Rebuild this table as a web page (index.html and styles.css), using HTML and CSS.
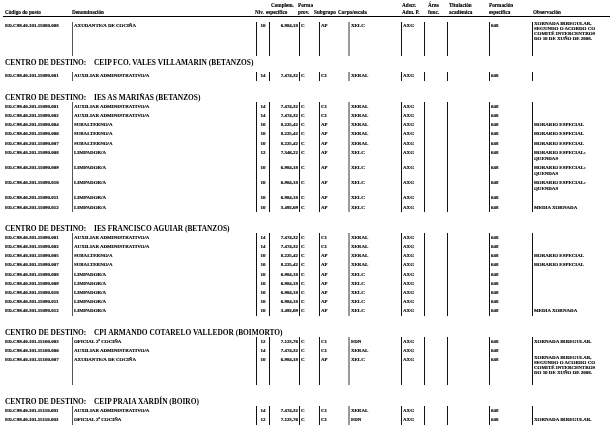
FILE: index.html
```html
<!DOCTYPE html>
<html lang="gl">
<head>
<meta charset="utf-8">
<title>Centros de destino</title>
<link rel="stylesheet" href="styles.css">
</head>
<body>
<div class="page">
  <div class="head">
    <div class="h"><span class="l">&nbsp;</span><span class="l">Código do posto</span></div>
    <div class="h"><span class="l">&nbsp;</span><span class="l">Denominación</span></div>
    <div class="h"><span class="l">&nbsp;</span><span class="l">Niv.</span></div>
    <div class="h"><span class="l ind">Complem.</span><span class="l">específico</span></div>
    <div class="h"><span class="l">Forma</span><span class="l">prov.</span></div>
    <div class="h"><span class="l">&nbsp;</span><span class="l">Subgrupo</span></div>
    <div class="h"><span class="l">&nbsp;</span><span class="l">Corpo/escala</span></div>
    <div class="h"><span class="l">Adscr.</span><span class="l">Adm. P.</span></div>
    <div class="h"><span class="l">Área</span><span class="l">func.</span></div>
    <div class="h"><span class="l">Titulación</span><span class="l">académica</span></div>
    <div class="h"><span class="l">Formación</span><span class="l">específica</span></div>
    <div class="h"><span class="l">&nbsp;</span><span class="l">Observación</span></div>
  </div>

  <div class="rows first">
    <div class="row tall0"><span class="c code">ED.C99.40.101.15080.008</span><span class="c den">AXUDANTE/A DE COCIÑA</span><span class="c niv">10</span><span class="c cmp">6.984,18</span><span class="c frm">C</span><span class="c sub">AP</span><span class="c crp">XELC</span><span class="c ads">AXG</span><span class="c are"></span><span class="c tit"></span><span class="c fes">648</span><span class="c obs long">XORNADA IRREGULAR,<br>SEGUNDO O ACORDO CO<br>COMITÉ INTERCENTROS<br>DO 10 DE XUÑO DE 2008.</span></div>
  </div>

  <div class="title t1"><span class="lab">CENTRO DE DESTINO:</span>CEIP FCO. VALES VILLAMARIN (BETANZOS)</div>
  <div class="rows single">
    <div class="row"><span class="c code">ED.C99.40.101.15090.001</span><span class="c den">AUXILIAR ADMINISTRATIVO/A</span><span class="c niv">14</span><span class="c cmp">7.474,32</span><span class="c frm">C</span><span class="c sub">C1</span><span class="c crp">XERAL</span><span class="c ads">AXG</span><span class="c are"></span><span class="c tit"></span><span class="c fes">648</span><span class="c obs"></span></div>
  </div>

  <div class="title"><span class="lab">CENTRO DE DESTINO:</span>IES AS MARIÑAS (BETANZOS)</div>
  <div class="rows">
    <div class="row"><span class="c code">ED.C99.40.201.15090.001</span><span class="c den">AUXILIAR ADMINISTRATIVO/A</span><span class="c niv">14</span><span class="c cmp">7.474,32</span><span class="c frm">C</span><span class="c sub">C1</span><span class="c crp">XERAL</span><span class="c ads">AXG</span><span class="c are"></span><span class="c tit"></span><span class="c fes">648</span><span class="c obs"></span></div>
    <div class="row"><span class="c code">ED.C99.40.201.15090.002</span><span class="c den">AUXILIAR ADMINISTRATIVO/A</span><span class="c niv">14</span><span class="c cmp">7.474,32</span><span class="c frm">C</span><span class="c sub">C1</span><span class="c crp">XERAL</span><span class="c ads">AXG</span><span class="c are"></span><span class="c tit"></span><span class="c fes">648</span><span class="c obs"></span></div>
    <div class="row"><span class="c code">ED.C99.40.201.15090.004</span><span class="c den">SUBALTERNO/A</span><span class="c niv">10</span><span class="c cmp">8.225,42</span><span class="c frm">C</span><span class="c sub">AP</span><span class="c crp">XERAL</span><span class="c ads">AXG</span><span class="c are"></span><span class="c tit"></span><span class="c fes">648</span><span class="c obs">HORARIO ESPECIAL</span></div>
    <div class="row"><span class="c code">ED.C99.40.201.15090.006</span><span class="c den">SUBALTERNO/A</span><span class="c niv">10</span><span class="c cmp">8.225,42</span><span class="c frm">C</span><span class="c sub">AP</span><span class="c crp">XERAL</span><span class="c ads">AXG</span><span class="c are"></span><span class="c tit"></span><span class="c fes">648</span><span class="c obs">HORARIO ESPECIAL</span></div>
    <div class="row"><span class="c code">ED.C99.40.201.15090.007</span><span class="c den">SUBALTERNO/A</span><span class="c niv">10</span><span class="c cmp">8.225,42</span><span class="c frm">C</span><span class="c sub">AP</span><span class="c crp">XERAL</span><span class="c ads">AXG</span><span class="c are"></span><span class="c tit"></span><span class="c fes">648</span><span class="c obs">HORARIO ESPECIAL</span></div>
    <div class="row"><span class="c code">ED.C99.40.201.15090.008</span><span class="c den">LIMPADOR/A</span><span class="c niv">12</span><span class="c cmp">7.346,22</span><span class="c frm">C</span><span class="c sub">AP</span><span class="c crp">XELC</span><span class="c ads">AXG</span><span class="c are"></span><span class="c tit"></span><span class="c fes">648</span><span class="c obs">HORARIO ESPECIAL:<br>QUENDAS</span></div>
    <div class="row"><span class="c code">ED.C99.40.201.15090.009</span><span class="c den">LIMPADOR/A</span><span class="c niv">10</span><span class="c cmp">6.984,18</span><span class="c frm">C</span><span class="c sub">AP</span><span class="c crp">XELC</span><span class="c ads">AXG</span><span class="c are"></span><span class="c tit"></span><span class="c fes">648</span><span class="c obs">HORARIO ESPECIAL:<br>QUENDAS</span></div>
    <div class="row"><span class="c code">ED.C99.40.201.15090.010</span><span class="c den">LIMPADOR/A</span><span class="c niv">10</span><span class="c cmp">6.984,18</span><span class="c frm">C</span><span class="c sub">AP</span><span class="c crp">XELC</span><span class="c ads">AXG</span><span class="c are"></span><span class="c tit"></span><span class="c fes">648</span><span class="c obs">HORARIO ESPECIAL:<br>QUENDAS</span></div>
    <div class="row"><span class="c code">ED.C99.40.201.15090.011</span><span class="c den">LIMPADOR/A</span><span class="c niv">10</span><span class="c cmp">6.984,18</span><span class="c frm">C</span><span class="c sub">AP</span><span class="c crp">XELC</span><span class="c ads">AXG</span><span class="c are"></span><span class="c tit"></span><span class="c fes">648</span><span class="c obs"></span></div>
    <div class="row"><span class="c code">ED.C99.40.201.15090.012</span><span class="c den">LIMPADOR/A</span><span class="c niv">10</span><span class="c cmp">3.492,09</span><span class="c frm">C</span><span class="c sub">AP</span><span class="c crp">XELC</span><span class="c ads">AXG</span><span class="c are"></span><span class="c tit"></span><span class="c fes">648</span><span class="c obs">MEDIA XORNADA</span></div>
  </div>

  <div class="title"><span class="lab">CENTRO DE DESTINO:</span>IES FRANCISCO AGUIAR (BETANZOS)</div>
  <div class="rows">
    <div class="row"><span class="c code">ED.C99.40.301.15090.001</span><span class="c den">AUXILIAR ADMINISTRATIVO/A</span><span class="c niv">14</span><span class="c cmp">7.474,32</span><span class="c frm">C</span><span class="c sub">C1</span><span class="c crp">XERAL</span><span class="c ads">AXG</span><span class="c are"></span><span class="c tit"></span><span class="c fes">648</span><span class="c obs"></span></div>
    <div class="row"><span class="c code">ED.C99.40.301.15090.002</span><span class="c den">AUXILIAR ADMINISTRATIVO/A</span><span class="c niv">14</span><span class="c cmp">7.474,32</span><span class="c frm">C</span><span class="c sub">C1</span><span class="c crp">XERAL</span><span class="c ads">AXG</span><span class="c are"></span><span class="c tit"></span><span class="c fes">648</span><span class="c obs"></span></div>
    <div class="row"><span class="c code">ED.C99.40.301.15090.005</span><span class="c den">SUBALTERNO/A</span><span class="c niv">10</span><span class="c cmp">8.225,42</span><span class="c frm">C</span><span class="c sub">AP</span><span class="c crp">XERAL</span><span class="c ads">AXG</span><span class="c are"></span><span class="c tit"></span><span class="c fes">648</span><span class="c obs">HORARIO ESPECIAL</span></div>
    <div class="row"><span class="c code">ED.C99.40.301.15090.007</span><span class="c den">SUBALTERNO/A</span><span class="c niv">10</span><span class="c cmp">8.225,42</span><span class="c frm">C</span><span class="c sub">AP</span><span class="c crp">XERAL</span><span class="c ads">AXG</span><span class="c are"></span><span class="c tit"></span><span class="c fes">648</span><span class="c obs">HORARIO ESPECIAL</span></div>
    <div class="row"><span class="c code">ED.C99.40.301.15090.008</span><span class="c den">LIMPADOR/A</span><span class="c niv">10</span><span class="c cmp">6.984,18</span><span class="c frm">C</span><span class="c sub">AP</span><span class="c crp">XELC</span><span class="c ads">AXG</span><span class="c are"></span><span class="c tit"></span><span class="c fes">648</span><span class="c obs"></span></div>
    <div class="row"><span class="c code">ED.C99.40.301.15090.009</span><span class="c den">LIMPADOR/A</span><span class="c niv">10</span><span class="c cmp">6.984,18</span><span class="c frm">C</span><span class="c sub">AP</span><span class="c crp">XELC</span><span class="c ads">AXG</span><span class="c are"></span><span class="c tit"></span><span class="c fes">648</span><span class="c obs"></span></div>
    <div class="row"><span class="c code">ED.C99.40.301.15090.010</span><span class="c den">LIMPADOR/A</span><span class="c niv">10</span><span class="c cmp">6.984,18</span><span class="c frm">C</span><span class="c sub">AP</span><span class="c crp">XELC</span><span class="c ads">AXG</span><span class="c are"></span><span class="c tit"></span><span class="c fes">648</span><span class="c obs"></span></div>
    <div class="row"><span class="c code">ED.C99.40.301.15090.011</span><span class="c den">LIMPADOR/A</span><span class="c niv">10</span><span class="c cmp">6.984,18</span><span class="c frm">C</span><span class="c sub">AP</span><span class="c crp">XELC</span><span class="c ads">AXG</span><span class="c are"></span><span class="c tit"></span><span class="c fes">648</span><span class="c obs"></span></div>
    <div class="row"><span class="c code">ED.C99.40.301.15090.012</span><span class="c den">LIMPADOR/A</span><span class="c niv">10</span><span class="c cmp">3.492,09</span><span class="c frm">C</span><span class="c sub">AP</span><span class="c crp">XELC</span><span class="c ads">AXG</span><span class="c are"></span><span class="c tit"></span><span class="c fes">648</span><span class="c obs">MEDIA XORNADA</span></div>
  </div>

  <div class="title"><span class="lab">CENTRO DE DESTINO:</span>CPI ARMANDO COTARELO VALLEDOR (BOIMORTO)</div>
  <div class="rows">
    <div class="row"><span class="c code">ED.C99.40.101.15100.003</span><span class="c den">OFICIAL 2ª COCIÑA</span><span class="c niv">12</span><span class="c cmp">7.123,76</span><span class="c frm">C</span><span class="c sub">C1</span><span class="c crp">EDN</span><span class="c ads">AXG</span><span class="c are"></span><span class="c tit"></span><span class="c fes">648</span><span class="c obs">XORNADA IRREGULAR.</span></div>
    <div class="row"><span class="c code">ED.C99.40.101.15100.006</span><span class="c den">AUXILIAR ADMINISTRATIVO/A</span><span class="c niv">14</span><span class="c cmp">7.474,32</span><span class="c frm">C</span><span class="c sub">C1</span><span class="c crp">XERAL</span><span class="c ads">AXG</span><span class="c are"></span><span class="c tit"></span><span class="c fes">648</span><span class="c obs"></span></div>
    <div class="row tall1"><span class="c code">ED.C99.40.101.15100.007</span><span class="c den">AXUDANTE/A DE COCIÑA</span><span class="c niv">10</span><span class="c cmp">6.984,18</span><span class="c frm">C</span><span class="c sub">AP</span><span class="c crp">XELC</span><span class="c ads">AXG</span><span class="c are"></span><span class="c tit"></span><span class="c fes">648</span><span class="c obs long">XORNADA IRREGULAR,<br>SEGUNDO O ACORDO CO<br>COMITÉ INTERCENTROS<br>DO 10 DE XUÑO DE 2008.</span></div>
  </div>

  <div class="title"><span class="lab">CENTRO DE DESTINO:</span>CEIP PRAIA XARDÍN (BOIRO)</div>
  <div class="rows last">
    <div class="row"><span class="c code">ED.C99.40.101.15110.001</span><span class="c den">AUXILIAR ADMINISTRATIVO/A</span><span class="c niv">14</span><span class="c cmp">7.474,32</span><span class="c frm">C</span><span class="c sub">C1</span><span class="c crp">XERAL</span><span class="c ads">AXG</span><span class="c are"></span><span class="c tit"></span><span class="c fes">648</span><span class="c obs"></span></div>
    <div class="row"><span class="c code">ED.C99.40.101.15110.003</span><span class="c den">OFICIAL 2ª COCIÑA</span><span class="c niv">12</span><span class="c cmp">7.123,76</span><span class="c frm">C</span><span class="c sub">C1</span><span class="c crp">EDN</span><span class="c ads">AXG</span><span class="c are"></span><span class="c tit"></span><span class="c fes">648</span><span class="c obs">XORNADA IRREGULAR.</span></div>
  </div>
</div>
</body>
</html>
```
FILE: styles.css
```css
* { box-sizing: border-box; }
html, body { margin: 0; padding: 0; background: #fff; }
body {
  font-family: "Liberation Serif", "Times New Roman", serif;
  font-weight: bold;
  color: #000;
  width: 616px;
  height: 439px;
  overflow: hidden;
}
.page { padding: 0 6px 0 3px; will-change: transform; }

/* header */
.head {
  display: grid;
  grid-template-columns: 69px 183px 11px 32px 16px 24px 64px 26px 21px 40px 44px 77px;
  padding-top: 1.5px;
  border-bottom: 1px solid #000;
  font-size: 5.2px;
  line-height: 7px;
  -webkit-text-stroke: 0.12px #000;
}
.h { white-space: nowrap; }
.h:first-child { padding-left: 2px; }
.l { display: block; }
.ind { padding-left: 5px; }

/* rows */
.rows.first { margin-top: 5px; }
.rows.single { margin-top: 4.7px; }
.row {
  display: grid;
  grid-template-columns: 69px 184px 13px 30px 20px 29px 53px 23px 23px 42px 43px 78px;
  font-size: 4.95px;
  -webkit-text-stroke: 0.15px #000;
}
.row.tall0 { min-height: 34px; }
.row.tall1 { min-height: 29.4px; }
.c {
  border-left: 1px solid #111;
  padding: 1.5px 0 1.7px 1px;
  line-height: 6px;
  white-space: nowrap;
}
.code { border-left: none; padding-left: 2px; }
.den { border-left-color: #555; }
.niv { text-align: center; padding-left: 0; }
.cmp { text-align: right; padding-right: 1px; padding-left: 0; }
.crp { border-left: 2px solid #9a9a9a; }
.obs.long { line-height: 4.9px; padding-top: 0.3px; }

/* section titles */
.title {
  font-size: 7.4px;
  line-height: 9.6px;
  padding-left: 2px;
  margin-top: 11.6px;
  white-space: nowrap;
}
.title.t1 { margin-top: 2.2px; }
.lab { display: inline-block; width: 89px; }
```
